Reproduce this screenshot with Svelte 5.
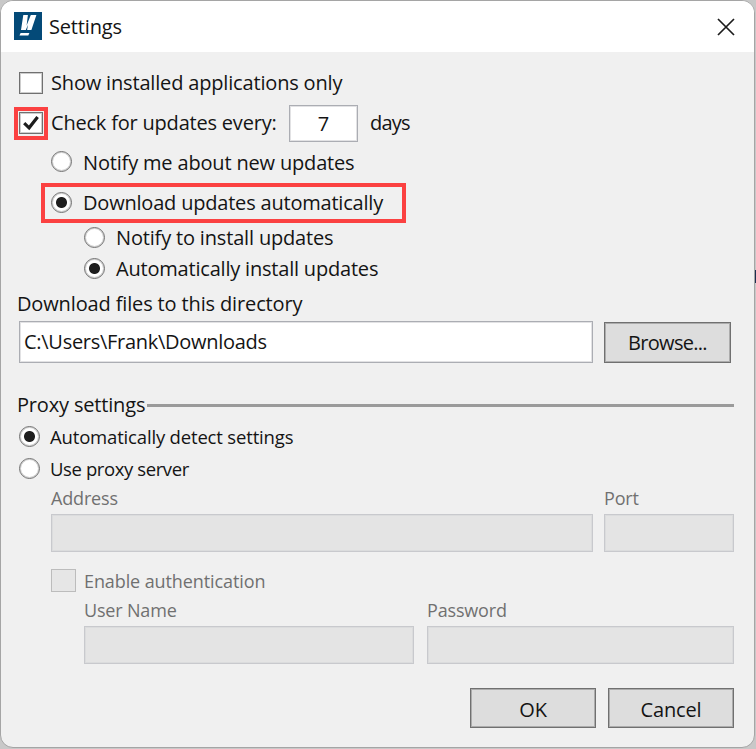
<script lang="ts">
  let installedOnly = false;
  let checkUpdates = true;
  let days = '7';
  let mode = 'download';
  let install = 'auto';
  let directory = 'C:\\Users\\Frank\\Downloads';
  let proxy = 'detect';
</script>

<div class="desktop">
  <div class="window">
    <header>
      <svg class="logo" viewBox="0 0 28 28">
        <rect width="28" height="28" fill="#044a78" />
        <path d="M9.3 2.9h4.6L12.6 13.5l4.2-10.6h5.6L17.4 18h-4.3l.9-5.2-2.2 5.2H7z" fill="#fff" />
        <path d="M6.6 20.9h8.8l-1.1 2.6H5.5z" fill="#fff" />
      </svg>
      <h1>Settings</h1>
      <button class="close" aria-label="Close">
        <svg viewBox="0 0 18 18"><path d="M1 1l16 16M17 1L1 17" stroke="#1c1c1c" stroke-width="1.7" /></svg>
      </button>
    </header>

    <main>
      <label class="row show">
        <input type="checkbox" bind:checked={installedOnly} />
        <span>Show installed applications only</span>
      </label>

      <div class="row check">
        <label class="row">
          <span class="marked"><input type="checkbox" bind:checked={checkUpdates} /></span>
          <span class="every">Check for updates every:</span>
        </label>
        <input class="days" type="text" bind:value={days} />
        <span class="unit">days</span>
      </div>

      <label class="row level1">
        <input type="radio" bind:group={mode} value="notify" />
        <span>Notify me about new updates</span>
      </label>
      <label class="row highlight">
        <input type="radio" bind:group={mode} value="download" />
        <span>Download updates automatically</span>
      </label>
      <label class="row level2">
        <input type="radio" bind:group={install} value="notify" />
        <span>Notify to install updates</span>
      </label>
      <label class="row level2 auto">
        <input type="radio" bind:group={install} value="auto" />
        <span>Automatically install updates</span>
      </label>

      <div class="caption">Download files to this directory</div>
      <div class="directory">
        <input type="text" bind:value={directory} />
        <button class="browse">Browse...</button>
      </div>

      <div class="section">
        <span>Proxy settings</span>
        <hr />
      </div>
      <label class="row small">
        <input type="radio" bind:group={proxy} value="detect" />
        <span>Automatically detect settings</span>
      </label>
      <label class="row small use">
        <input type="radio" bind:group={proxy} value="server" />
        <span>Use proxy server</span>
      </label>

      <div class="fields server">
        <label>Address<input type="text" disabled /></label>
        <label>Port<input type="text" disabled /></label>
      </div>
      <label class="row auth">
        <input type="checkbox" disabled />
        <span>Enable authentication</span>
      </label>
      <div class="fields login">
        <label>User Name<input type="text" disabled /></label>
        <label>Password<input type="password" disabled /></label>
      </div>

      <footer>
        <button>OK</button>
        <button>Cancel</button>
      </footer>
    </main>
  </div>
</div>

<style>
  :global(body) { margin: 0; }
  .desktop {
    height: 749px;
    box-sizing: border-box;
    padding: 0 1px 1px 0;
    background: linear-gradient(#1d2f50, #1d2f50) right 270px / 1px 13px no-repeat #c8c8c8;
    font: 20px/28px 'Open Sans', sans-serif;
    letter-spacing: -0.17px;
    color: #141414;
    overflow: hidden;
  }
  .desktop * { box-sizing: border-box; }
  .window {
    height: 748px;
    border: 1px solid #a5a5a5;
    border-radius: 13px;
    background: #f0f0f0;
    overflow: hidden;
  }
  header {
    display: flex;
    align-items: center;
    height: 51px;
    padding: 0 19px 0 13px;
    background: #fff;
  }
  .logo { width: 28px; height: 28px; margin: -1px 7px 0 0; }
  h1 { margin: 0; font-size: 20px; font-weight: 400; }
  .close {
    width: 18px;
    height: 18px;
    margin-left: auto;
    border: 0;
    padding: 0;
    background: none;
    box-shadow: none;
  }
  .close svg { display: block; }

  main { padding: 12px 20px 0 16px; }
  .row { display: flex; align-items: center; white-space: nowrap; }
  input, button { font: inherit; letter-spacing: inherit; color: inherit; }
  input { margin: 0; }
  input[type='text'], input[type='password'] {
    border: 1px solid #abadb3;
    border-radius: 0;
    padding: 0 4px;
    background: #fff;
    box-shadow: inset 0 0 0 1px rgba(171, 173, 179, 0.35);
  }
  input[type='checkbox'] {
    appearance: none;
    flex: none;
    width: 24px;
    height: 22px;
    border: 1px solid #707070;
    background: #fff;
    box-shadow: inset 0 0 0 1px rgba(112, 112, 112, 0.35);
  }
  input[type='checkbox']:checked {
    background: #fff url("data:image/svg+xml,%3Csvg xmlns='http://www.w3.org/2000/svg' viewBox='0 0 22 20'%3E%3Cpath d='M4.2 10.2l4.9 4.6L17.6 4' fill='none' stroke='%231c1c1c' stroke-width='3.2'/%3E%3C/svg%3E") center / 100% 100% no-repeat;
  }
  input[type='radio'] {
    appearance: none;
    flex: none;
    width: 21px;
    height: 21px;
    margin: -2px 11px 0 0;
    border: 1px solid #707070;
    border-radius: 50%;
    background: #fff;
    box-shadow: inset 0 0 0 1px rgba(112, 112, 112, 0.35);
  }
  input[type='radio']:checked { background: radial-gradient(circle, #1e1e1e 5px, #fff 6px); }
  button {
    border: 1px solid #707070;
    border-radius: 0;
    padding: 0;
    background: #ddd;
    box-shadow: inset 0 0 0 1px rgba(112, 112, 112, 0.45);
  }

  .show { height: 38px; padding-left: 2px; }
  .show span { margin-left: 8px; }
  .check { height: 42px; margin-left: -3px; }
  .marked {
    display: flex;
    justify-content: center;
    align-items: center;
    width: 34px;
    height: 33px;
    border: 4px solid #fb4141;
  }
  .every { width: 226px; margin-left: 3px; letter-spacing: -0.2px; }
  .check .days { width: 69px; height: 37px; margin: 0 12px; text-align: center; }
  .unit { letter-spacing: -0.8px; }

  .level1 { height: 39px; padding: 0 0 2px 34px; }
  .highlight {
    width: 365px;
    height: 40px;
    margin-left: 24px;
    padding-left: 6px;
    border: 4px solid #fb4141;
    letter-spacing: -0.2px;
  }
  .level2 { height: 30px; padding-left: 67px; }
  .auto { height: 32px; letter-spacing: -0.2px; }

  .caption { height: 36px; line-height: 38px; letter-spacing: -0.14px; }
  .directory { display: flex; gap: 11px; margin-left: 2px; align-items: flex-end; }
  .directory input { width: 574px; height: 42px; padding-bottom: 1px; letter-spacing: -0.28px; }
  .browse { width: 127px; height: 41px; padding-top: 1px; letter-spacing: -0.7px; }

  .section { display: flex; align-items: center; height: 28px; margin: 28px 0 2px; }
  hr { flex: 1; height: 3px; margin: 0 0 0 2px; border: 0; background: #9a9a9a; }
  .small { height: 32px; padding-left: 2px; font-size: 18.5px; }
  .small input[type='radio'] { margin-right: 10px; }
  .use { letter-spacing: -0.4px; }

  .fields { display: grid; color: #707070; font-size: 18px; line-height: 26px; }
  .fields label { display: flex; flex-direction: column; gap: 3px; }
  .fields input { width: 100%; height: 38px; }
  .fields input:disabled {
    border-color: #c8c9cd;
    background: #e4e4e4;
    box-shadow: inset 0 0 0 1px rgba(200, 201, 205, 0.3);
  }
  .server { grid-template-columns: 542px 130px; gap: 11px; margin-left: 34px; }
  .auth { height: 24px; margin: 16px 0 0 34px; color: #707070; font-size: 18px; letter-spacing: -0.1px; }
  .auth input[type='checkbox'] {
    width: 25px;
    height: 23px;
    margin-right: 8px;
    border-color: #bcbcbc;
    background: #e6e6e6;
    box-shadow: none;
  }
  .auth span { padding-top: 2px; }
  .login { grid-template-columns: 330px 307px; gap: 13px; margin: 5px 0 0 67px; }

  footer { display: flex; justify-content: flex-end; gap: 12px; margin-top: 24px; }
  footer button { width: 126px; height: 40px; padding-top: 3px; }
</style>
